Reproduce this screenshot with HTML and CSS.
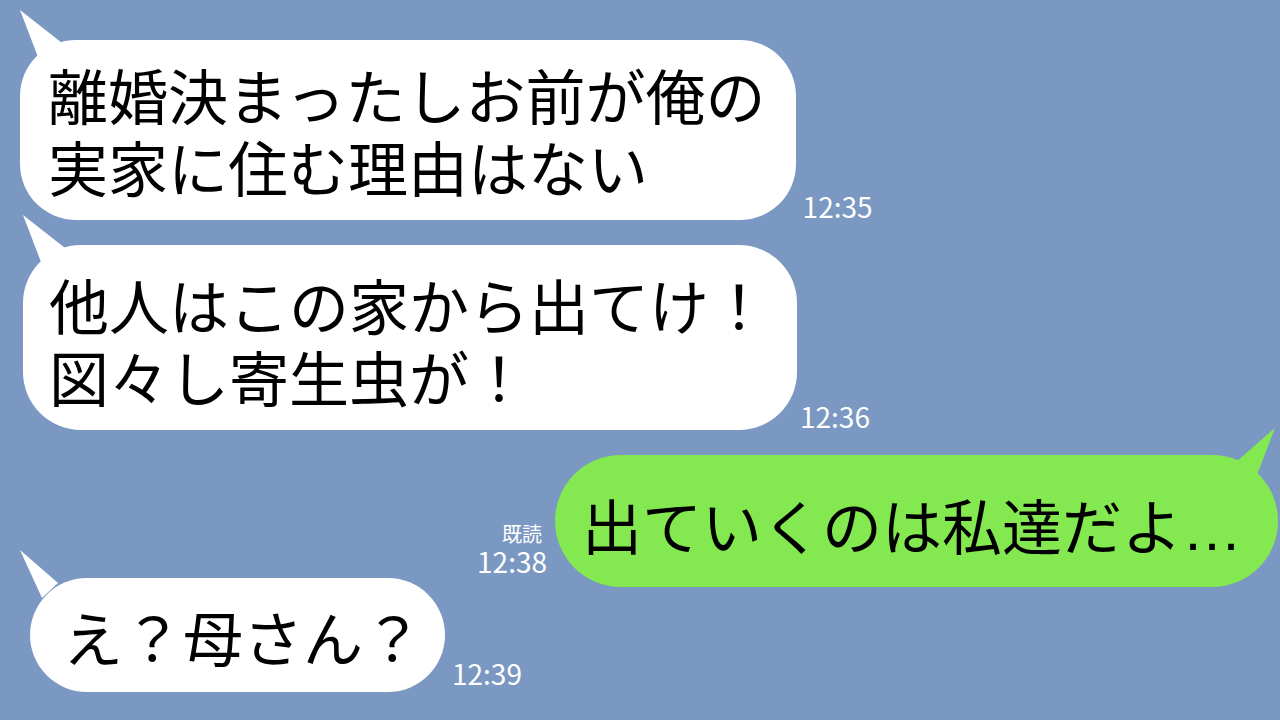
FILE: index.html
```html
<!DOCTYPE html>
<html lang="ja">
<head>
    <meta charset="UTF-8">
    <meta name="viewport" content="width=device-width, initial-scale=1.0">
    <title>トーク</title>
    <link rel="stylesheet" href="styles.css">
</head>
<body>
    <div class="chat">
        <!-- received -->
        <div class="row in r1">
            <div class="bubble white b1">離婚決まったしお前が俺の<br>実家に住む理由はない</div>
            <div class="meta"><span class="time">12:35</span></div>
        </div>
        <div class="row in r2">
            <div class="bubble white b2">他人はこの家から出てけ！<br>図々し寄生虫が！</div>
            <div class="meta"><span class="time">12:36</span></div>
        </div>
        <!-- sent -->
        <div class="row out r3">
            <div class="meta sent">
                <span class="read">既読</span>
                <span class="time">12:38</span>
            </div>
            <div class="bubble green b3">出ていくのは私達だよ<span class="dots">…</span></div>
        </div>
        <div class="row in r4">
            <div class="bubble white b4">え？母さん？</div>
            <div class="meta"><span class="time">12:39</span></div>
        </div>
    </div>
</body>
</html>
```

FILE: styles.css
```css
body {
    margin: 0;
    background: #7a98c2;
    font-family: "Noto Sans CJK JP", sans-serif;
    width: 1280px;
    height: 720px;
    overflow: hidden;
}

.chat {
    display: flex;
    flex-direction: column;
    padding-top: 40px;
}

.row {
    display: flex;
    align-items: flex-end;
}

.row.out {
    justify-content: flex-end;
    padding-right: 2px;
}

.r1 { padding-left: 20px; }
.r2 { padding-left: 23px; margin-top: 25px; }
.r3 { margin-top: 25px; }
.r4 { padding-left: 30px; margin-top: -9px; }

.bubble {
    position: relative;
    font-size: 60px;
    line-height: 72px;
    color: #000;
    white-space: nowrap;
}

.bubble.white {
    background: #fff;
}

.bubble.green {
    background: #84e850;
}

/* tails */
.bubble::before {
    content: "";
    position: absolute;
    width: 50px;
    height: 50px;
}

.bubble.white::before {
    background: #fff;
    left: 0;
    top: -30px;
    clip-path: polygon(0 0, 18px 47px, 42px 33px);
}

.bubble.green::before {
    background: #84e850;
    right: 3px;
    top: -27px;
    clip-path: polygon(50px 0, 32px 47px, 11px 34px);
}

.b1 {
    padding: 18px 30px 18px 28px;
    border-radius: 56px;
}

.b2 {
    padding: 23px 28px 18px 26px;
    border-radius: 58px;
}

.b3 {
    height: 72px;
    padding: 33px 36px 27px 27px;
    border-radius: 66px;
}

.dots {
    font-family: "Liberation Sans", sans-serif;
    line-height: 1;
}

.b4 {
    padding: 22px 22px 20px 33px;
    border-radius: 57px;
}

.bubble.b4::before {
    left: -10px;
    top: -28px;
    clip-path: polygon(0 0, 22px 48px, 38px 33px);
}

.meta {
    display: flex;
    flex-direction: column;
    color: #fff;
    margin-left: 7px;
}

.r2 .meta {
    margin-left: 3px;
}

.meta.sent {
    align-items: flex-end;
    margin-left: 0;
    margin-right: 8px;
    padding-bottom: 12px;
}

.r4 .meta {
    padding-bottom: 5px;
}

.time {
    font-size: 28px;
    line-height: 28px;
}

.read {
    font-size: 20px;
    line-height: 26px;
    margin-right: 5px;
}
```
